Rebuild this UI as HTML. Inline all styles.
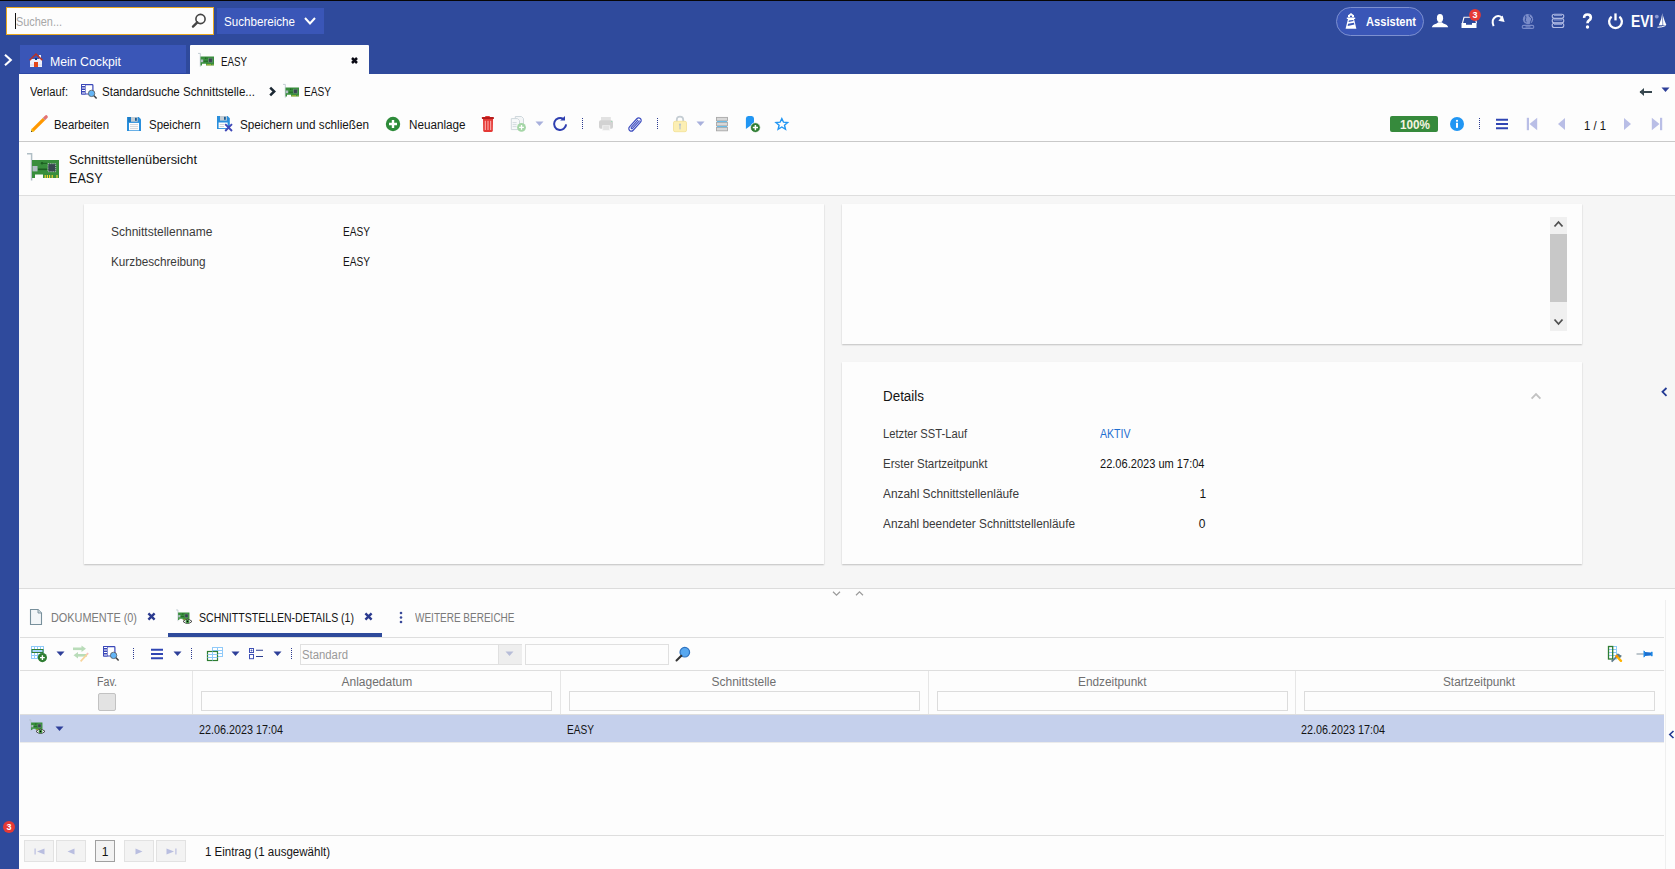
<!DOCTYPE html>
<html><head><meta charset="utf-8"><title>EASY</title>
<style>
html,body{margin:0;padding:0;}
body{width:1675px;height:869px;overflow:hidden;position:relative;background:#2f4a9c;font-family:"Liberation Sans",sans-serif;}
.a{position:absolute;}
.t{position:absolute;white-space:nowrap;line-height:normal;transform-origin:0 0;font-family:"Liberation Sans",sans-serif;}
svg{position:absolute;overflow:visible;}

</style></head>
<body>
<!-- top dark line -->
<div class="a" style="left:0;top:0;width:1675px;height:1px;background:#070604"></div>
<!-- search box -->
<div class="a" style="left:6px;top:7px;width:206px;height:26px;border:1px solid #e9a81f;background:#fdfdfd"></div>
<div class="a" style="left:15px;top:13px;width:1px;height:16px;background:#111"></div>
<svg style="left:190px;top:12px" width="18" height="18" viewBox="0 0 18 18"><circle cx="10.5" cy="7" r="4.6" fill="none" stroke="#444" stroke-width="1.6"/><path d="M7.3 10.3 L3 14.6" stroke="#444" stroke-width="2.4" stroke-linecap="round"/></svg>
<!-- Suchbereiche -->
<div class="a" style="left:217px;top:8px;width:107px;height:26px;background:#3a56b7"></div>
<svg style="left:303px;top:16px" width="14" height="10" viewBox="0 0 14 10"><path d="M2 2 L7 7.5 L12 2" fill="none" stroke="#fff" stroke-width="2"/></svg>
<!-- sidebar chevron -->
<svg style="left:3px;top:53px" width="10" height="14" viewBox="0 0 10 14"><path d="M2 1.8 L7.8 7 L2 12.2" fill="none" stroke="#fff" stroke-width="2.1"/></svg>
<!-- tabs -->
<div class="a" style="left:20px;top:45px;width:166px;height:29px;background:#3a56b7"></div>
<div class="a" style="left:20px;top:73px;width:166px;height:1px;background:#2c47a5"></div>
<svg style="left:29px;top:53px" width="14" height="14" viewBox="0 0 14 14"><rect x="10" y="2" width="2" height="3.5" fill="#eef0fa"/><rect x="1" y="6" width="12" height="8" fill="#eef0fa"/><rect x="1" y="11.5" width="12" height="1" fill="#c8cbe8" opacity=".7"/><path d="M0.6 7.2 L7 1 L13.4 7.2" fill="none" stroke="#b83226" stroke-width="1.6"/><rect x="5" y="9" width="4" height="5" fill="#e4461a"/><rect x="6" y="5" width="2" height="2" fill="#0b3a80"/></svg>
<div class="a" style="left:190px;top:45px;width:179px;height:30px;background:#fdfdfd;border-radius:1px 1px 0 0"></div>
<svg style="left:198px;top:53px" width="16" height="14" viewBox="0 0 32 28"><use href="#nic"/></svg>
<svg style="left:350px;top:56px" width="10" height="10" viewBox="0 0 10 10"><path d="M2 2 L7 7 M7 2 L2 7" stroke="#0a0a14" stroke-width="2.5"/></svg>
<!-- header right -->
<div class="a" style="left:1336px;top:7px;width:86px;height:27px;border:1px solid #7d90d0;border-radius:15px;background:#3a56b7"></div>
<svg style="left:1345px;top:12px" width="12" height="18" viewBox="0 0 12 18"><path d="M3.2 3.2 L6 0.9 L8.8 3.2 Z" fill="#fff"/><rect x="3" y="3" width="6" height="2.3" fill="#fff"/><rect x="5" y="3.7" width="2" height="1.4" fill="#3a56b7"/><rect x="1.8" y="5.6" width="8.4" height="1.4" fill="#fff"/><path d="M3 7 L9 7 L11.4 16.8 L0.6 16.8 Z" fill="#fff"/><path d="M3.9 8.6 L8.2 7.9 L8.5 9.1 L3.6 10.1 Z" fill="#3a56b7"/><path d="M3.1 11.8 L8.9 10.7 L9.4 12.6 L2.6 13.9 Z" fill="#3a56b7"/></svg>
<svg style="left:1431px;top:13px" width="18" height="15" viewBox="0 0 18 15"><ellipse cx="9" cy="5.2" rx="3.1" ry="4.1" fill="#fff"/><path d="M0.8 14.3 Q1.2 11.6 5.6 10.4 L7.2 9.3 L10.8 9.3 L12.4 10.4 Q16.8 11.6 17.2 14.3 Z" fill="#fff"/></svg>
<svg style="left:1461px;top:16px" width="17" height="13" viewBox="0 0 17 13"><path d="M1.5 7 L3 1.3 L14 1.3 L15.5 7" fill="none" stroke="#fff" stroke-width="1.1"/><path d="M0.5 7 H5 V8.8 H11 V7 H15.5 V12 H0.5 Z" fill="#fff"/></svg>
<svg style="left:1469px;top:9px" width="12" height="12" viewBox="0 0 12 12"><circle cx="6" cy="6" r="5.9" fill="#e53935"/><text x="6" y="9.2" font-family="Liberation Sans" font-size="9" font-weight="700" fill="#fff" text-anchor="middle">3</text></svg>
<svg style="left:1490px;top:13px" width="16" height="15" viewBox="0 0 16 15"><path d="M3.6 13.2 Q0.8 6.5 5.8 3.6 Q9 2 11.8 4.6" fill="none" stroke="#fff" stroke-width="2"/><path d="M12.6 2.6 L14.6 8.9 L8.4 7.8 Z" fill="#fff"/></svg>
<svg style="left:1521px;top:13px" width="14" height="16" viewBox="0 0 14 16"><circle cx="7" cy="6.2" r="5.1" fill="#7b8dca"/><path d="M4.2 2.5 Q5.6 4 4.6 5.6 Q3.6 7.3 5.3 9.2 M8.2 1.4 Q7.5 3.5 9.6 4.6 Q11.6 5.4 10.2 7.6 Q9 9.4 9.8 11" fill="none" stroke="#2f4a9c" stroke-width="1"/><rect x="1.2" y="12.4" width="11.6" height="3" rx="1.5" fill="none" stroke="#7b8dca" stroke-width="1.1"/><path d="M4.5 13.9 H9.5" stroke="#7b8dca" stroke-width="1.2"/></svg>
<svg style="left:1551px;top:13px" width="14" height="16" viewBox="0 0 14 16"><g fill="none" stroke="#b3bde5" stroke-width="1.1"><rect x="1.2" y="1.3" width="11.6" height="4" rx="2"/><rect x="1.2" y="5.8" width="11.6" height="4" rx="2"/><rect x="1.2" y="10.3" width="11.6" height="4.2" rx="2"/></g><path d="M3 2.5 H11 M3 7 H11 M3 11.5 H11" stroke="#8f9fd6" stroke-width=".9"/></svg>
<svg style="left:1582px;top:13px" width="11" height="16" viewBox="0 0 11 16"><path d="M2.2 4.8 Q2 1.5 5.4 1.5 Q8.8 1.5 8.8 4.4 Q8.8 6.2 7 7.4 Q5.5 8.4 5.5 10.2" fill="none" stroke="#fff" stroke-width="2.7"/><circle cx="5.5" cy="14" r="1.7" fill="#fff"/></svg>
<svg style="left:1607px;top:13px" width="18" height="16" viewBox="0 0 18 16"><path d="M4.6 3.6 A6.4 6.4 0 1 0 12.4 3.6" fill="none" stroke="#fff" stroke-width="2.3"/><path d="M8.5 0.4 L8.5 7.4" stroke="#fff" stroke-width="2.3"/></svg>
<svg style="left:1653px;top:12px" width="15" height="17" viewBox="0 0 15 17"><circle cx="3.8" cy="4.6" r="1.9" fill="#8c9bd4"/><path d="M9.3 1 Q8.8 7 5.8 13.2 L9.6 13.2 Z" fill="#fff"/><path d="M9.9 3.5 Q11.5 9 13.4 13 L10.2 13.2 Z" fill="#fff"/><path d="M4.5 15.3 Q9 15.2 12.6 13.6" fill="none" stroke="#fff" stroke-width="1"/></svg>

<!-- content panel -->
<div class="a" style="left:19px;top:74px;width:1656px;height:795px;background:#fdfdfd"></div>
<!-- breadcrumb icons -->
<svg style="left:81px;top:84px" width="17" height="16" viewBox="0 0 17 16"><rect x="0.6" y="0.6" width="11.3" height="9.4" rx=".8" fill="#fff" stroke="#3a47b8" stroke-width="1.2"/><rect x="0" y="0" width="4.6" height="10.6" rx=".6" fill="#3a47b8"/><g fill="#fff"><rect x="1" y="1" width="3" height="1"/><rect x="1" y="3.5" width="3" height="1"/><rect x="1" y="6" width="3" height="1"/><rect x="1" y="8.5" width="3" height="1"/></g><path d="M12.8 11.6 L15.6 14.6" stroke="#3d3d3d" stroke-width="1.5"/><circle cx="10.6" cy="9.4" r="3.2" fill="#64b5f6" stroke="#5a5a5a" stroke-width=".8"/></svg>
<svg style="left:268px;top:86px" width="9" height="11" viewBox="0 0 9 11"><path d="M2.2 1.6 L6.2 5.5 L2.2 9.4" fill="none" stroke="#1c2833" stroke-width="2.5"/></svg>
<svg style="left:283px;top:84px" width="16" height="14" viewBox="0 0 32 28"><use href="#nic"/></svg>
<svg style="left:1639px;top:87px" width="14" height="10" viewBox="0 0 14 10"><path d="M1 5 L13 5" stroke="#37474f" stroke-width="2"/><path d="M0.5 5 L5 1 L5 9 Z" fill="#37474f"/></svg>
<svg style="left:1661px;top:87px" width="9" height="6" viewBox="0 0 9 6"><path d="M0.5 0.5 L8.5 0.5 L4.5 5 Z" fill="#2e3f99"/></svg>

<!-- toolbar icons -->
<svg style="left:30px;top:115px" width="18" height="18" viewBox="0 0 18 18"><path d="M2.6 15.4 L14.4 3.6" stroke="#ff9800" stroke-width="3.3"/><path d="M13.8 4.2 L15.2 2.8" stroke="#b0bec5" stroke-width="3.3"/><path d="M15.1 2.9 L16.2 1.8" stroke="#e57373" stroke-width="3.3" stroke-linecap="round"/><path d="M1 17 L1.5 13.6 L4.4 16.5 Z" fill="#ffc107"/><path d="M1 17 L1.3 15.4 L2.6 16.7 Z" fill="#333"/></svg>
<svg style="left:126px;top:116px" width="16" height="16" viewBox="0 0 16 16"><path d="M1 1 H12.8 L15 3.3 V15 H1 Z" fill="#2a8fdc"/><rect x="2" y="1" width="3" height="5" fill="#1f7cc4"/><rect x="5" y="1" width="6.7" height="4.7" fill="#c4ccd2"/><rect x="9" y="1.8" width="1.8" height="3" fill="#1a5c94"/><rect x="3" y="6.9" width="10" height="7.4" fill="#fff"/><path d="M4 8.6 H12 M4 10.6 H12 M4 12.6 H12" stroke="#c9d0d5" stroke-width=".9"/></svg>
<svg style="left:216px;top:115px" width="18" height="18" viewBox="0 0 18 18"><path d="M1 1 H11.6 L13.8 3.2 V14 H1 Z" fill="#2a8fdc"/><rect x="4" y="1" width="6.9" height="4.6" fill="#c4ccd2"/><rect x="8" y="1.8" width="1.8" height="3" fill="#1a5c94"/><rect x="2.6" y="7.5" width="9" height="5.6" fill="#fff"/><path d="M3.6 9.5 H8 M3.6 11.5 H8" stroke="#c9d0d5" stroke-width=".9"/><path d="M9.2 9.2 L16 16 M16 9.2 L9.2 16" stroke="#3f48b8" stroke-width="1.9"/></svg>
<svg style="left:385px;top:116px" width="16" height="16" viewBox="0 0 16 16"><circle cx="8" cy="8" r="7.2" fill="#2e8b3a"/><path d="M8 4 V12 M4 8 H12" stroke="#fff" stroke-width="2.4"/></svg>
<svg style="left:481px;top:115px" width="14" height="18" viewBox="0 0 14 18"><rect x="4" y="1" width="5" height="2" rx="1" fill="#e53935"/><rect x="0.9" y="2" width="12" height="2" rx=".6" fill="#b71c1c"/><path d="M2 4 L12 4 L11.8 15.5 Q11.7 17 10.2 17 L3.8 17 Q2.3 17 2.2 15.5 Z" fill="#e53935"/><path d="M4.3 5.8 V15 M7 5.8 V15 M9.7 5.8 V15" stroke="#ffb8b8" stroke-width="1"/></svg>
<svg style="left:509px;top:115px" width="18" height="18" viewBox="0 0 18 18"><path d="M6.3 1.5 H12.5 L14.5 3.5 V12 H6.3 Z" fill="#f4f6f7" stroke="#cfd8dc" stroke-width="1"/><path d="M2.3 3.6 H8.5 L10.5 5.6 V14.6 H2.3 Z" fill="#f7f9fa" stroke="#cfd8dc" stroke-width="1"/><path d="M3.6 7.6 H7.6 M3.6 9.6 H7.6 M3.6 11.6 H7.6" stroke="#cfd8dc" stroke-width=".9"/><circle cx="12.5" cy="12.4" r="4.4" fill="#a5d6a7"/><path d="M12.5 10 V14.8 M10.1 12.4 H14.9" stroke="#fff" stroke-width="1.3"/></svg>
<svg style="left:535px;top:121px" width="9" height="6" viewBox="0 0 9 6"><path d="M0.5 0.5 L8.5 0.5 L4.5 5 Z" fill="#a8b0dc"/></svg>
<svg style="left:552px;top:115px" width="16" height="17" viewBox="0 0 16 17"><path d="M14.1 9.4 A6 6 0 1 1 11.3 3.9" fill="none" stroke="#2f3fb0" stroke-width="2"/><path d="M13 1 L13 5.6 L8.2 5.6 Z" fill="#2f3fb0"/></svg>
<svg style="left:581px;top:118px" width="3" height="13" viewBox="0 0 3 13"><rect x="1" y="0" width="1" height="1" fill="#2b3a90"/><rect x="1" y="2" width="1" height="1" fill="#2b3a90"/><rect x="1" y="4" width="1" height="1" fill="#2b3a90"/><rect x="1" y="6" width="1" height="1" fill="#2b3a90"/><rect x="1" y="8" width="1" height="1" fill="#2b3a90"/><rect x="1" y="10" width="1" height="1" fill="#2b3a90"/></svg>
<svg style="left:598px;top:116px" width="16" height="16" viewBox="0 0 16 16"><rect x="3" y="1" width="9.8" height="3.8" fill="#e2e2e2"/><rect x="1" y="4.2" width="14" height="8.6" rx="1.8" fill="#d2d2d2"/><rect x="4.2" y="9.3" width="8" height="5.4" fill="#f2f2f2"/><path d="M5.2 11 H11.2 M5.2 13 H11" stroke="#cdcdcd" stroke-width=".8"/><circle cx="13.7" cy="5.5" r=".6" fill="#8ee0b0"/></svg>
<svg style="left:627px;top:115px" width="16" height="17" viewBox="0 0 16 17"><g transform="translate(8 9.5) rotate(42)"><rect x="-2.5" y="-8" width="5" height="16" rx="2.5" fill="none" stroke="#3f4fc0" stroke-width="1.2"/><path d="M-0.8 -5.5 V4.6 A0.8 0.8 0 0 0 0.8 4.6 V-6" fill="none" stroke="#3f4fc0" stroke-width="1.1"/></g></svg>
<svg style="left:656px;top:118px" width="3" height="13" viewBox="0 0 3 13"><rect x="1" y="0" width="1" height="1" fill="#2b3a90"/><rect x="1" y="2" width="1" height="1" fill="#2b3a90"/><rect x="1" y="4" width="1" height="1" fill="#2b3a90"/><rect x="1" y="6" width="1" height="1" fill="#2b3a90"/><rect x="1" y="8" width="1" height="1" fill="#2b3a90"/><rect x="1" y="10" width="1" height="1" fill="#2b3a90"/></svg>
<svg style="left:672px;top:115px" width="16" height="18" viewBox="0 0 16 18"><path d="M4.8 6.5 V4.8 Q4.8 1.6 8 1.6 Q11.2 1.6 11.2 4.8 V6.5" fill="none" stroke="#c5cdd3" stroke-width="1.8"/><rect x="1.5" y="6.3" width="13" height="10.4" rx="1.5" fill="#fcefb4" stroke="#f1df94" stroke-width=".8"/><circle cx="8" cy="9.6" r="1.1" fill="#b8c4cc"/><rect x="7.4" y="9.8" width="1.2" height="4.6" fill="#b8c4cc"/></svg>
<svg style="left:696px;top:121px" width="9" height="6" viewBox="0 0 9 6"><path d="M0.5 0.5 L8.5 0.5 L4.5 5 Z" fill="#a8b0dc"/></svg>
<svg style="left:715px;top:116px" width="14" height="16" viewBox="0 0 14 16"><g fill="#d8d8d8" stroke="#a8a8a8" stroke-width=".9"><rect x="1.5" y="1.4" width="11" height="3.4"/><rect x="1.5" y="6.4" width="11" height="3.4"/><rect x="1.5" y="11.4" width="11" height="3.4"/></g><path d="M2 5.6 H12 M2 10.6 H12" stroke="#4fb3e8" stroke-width=".9"/></svg>
<svg style="left:744px;top:115px" width="17" height="18" viewBox="0 0 17 18"><path d="M1.9 3.5 Q1.9 1 4.3 1 L7.6 1 Q10 1 10 3.5 L10 13 L6 11 L1.9 14 Z" fill="#2196f3"/><circle cx="11.4" cy="12.6" r="4.9" fill="#2e7d32" stroke="#fdfdfd" stroke-width=".8"/><path d="M11.4 10 V15.2 M8.8 12.6 H14" stroke="#fff" stroke-width="1.5"/></svg>
<svg style="left:774px;top:116px" width="16" height="16" viewBox="0 0 16 16"><path d="M7.8 2.6 L9.5 6.2 L13.6 6.5 L10.5 9.2 L11.5 13.3 L7.8 11 L4.1 13.3 L5.1 9.2 L2 6.5 L6.1 6.2 Z" fill="none" stroke="#2196f3" stroke-width="1.4" stroke-linejoin="miter"/></svg>

<!-- right toolbar -->
<div class="a" style="left:1390px;top:116px;width:48px;height:16px;background:#368a3c;border-radius:2px"></div>
<svg style="left:1449px;top:116px" width="16" height="16" viewBox="0 0 16 16"><circle cx="8" cy="8" r="7" fill="#2196f3"/><circle cx="8" cy="4.8" r="1.1" fill="#fff"/><rect x="7" y="6.8" width="2" height="5" fill="#fff"/></svg>
<svg style="left:1478px;top:118px" width="3" height="13" viewBox="0 0 3 13"><rect x="1" y="0" width="1" height="1" fill="#2b3a90"/><rect x="1" y="2" width="1" height="1" fill="#2b3a90"/><rect x="1" y="4" width="1" height="1" fill="#2b3a90"/><rect x="1" y="6" width="1" height="1" fill="#2b3a90"/><rect x="1" y="8" width="1" height="1" fill="#2b3a90"/><rect x="1" y="10" width="1" height="1" fill="#2b3a90"/></svg>
<svg style="left:1495px;top:118px" width="14" height="12" viewBox="0 0 14 12"><path d="M1 1.8 H13 M1 6 H13 M1 10.2 H13" stroke="#2f45b3" stroke-width="2"/></svg>
<svg style="left:1526px;top:117px" width="12" height="14" viewBox="0 0 12 14"><rect x="0.8" y="0.8" width="2.2" height="12.4" fill="#b9bee6"/><path d="M11.2 0.8 L3.5 7 L11.2 13.2 Z" fill="#b9bee6"/></svg>
<svg style="left:1557px;top:117px" width="9" height="14" viewBox="0 0 9 14"><path d="M8 1 L1 7 L8 13 Z" fill="#b9bee6"/></svg>
<svg style="left:1623px;top:117px" width="9" height="14" viewBox="0 0 9 14"><path d="M1 1 L8 7 L1 13 Z" fill="#b9bee6"/></svg>
<svg style="left:1651px;top:117px" width="12" height="14" viewBox="0 0 12 14"><rect x="9" y="0.8" width="2.2" height="12.4" fill="#b9bee6"/><path d="M0.8 0.8 L8.5 7 L0.8 13.2 Z" fill="#b9bee6"/></svg>

<div class="a" style="left:19px;top:141px;width:1656px;height:1px;background:#c9c9c9"></div>
<!-- header big icon -->
<svg style="left:27px;top:153px" width="32" height="28" viewBox="0 0 32 28"><use href="#nic"/></svg>
<div class="a" style="left:19px;top:195px;width:1656px;height:1px;background:#dedede"></div>
<!-- gray content area -->
<div class="a" style="left:19px;top:196px;width:1656px;height:392px;background:#f6f6f6"></div>
<div class="a" style="left:19px;top:588px;width:1656px;height:1px;background:#dcdcdc"></div>
<!-- cards -->
<div class="a" style="left:84px;top:204px;width:740px;height:360px;background:#fdfdfd;box-shadow:0 1px 1.5px rgba(0,0,0,.22)"></div>
<div class="a" style="left:842px;top:204px;width:740px;height:140px;background:#fdfdfd;box-shadow:0 1px 1.5px rgba(0,0,0,.22)"></div>
<div class="a" style="left:842px;top:362px;width:740px;height:202px;background:#fdfdfd;box-shadow:0 1px 1.5px rgba(0,0,0,.22)"></div>
<!-- scrollbar -->
<div class="a" style="left:1550px;top:217px;width:17px;height:114px;background:#f0f0f0"></div>
<div class="a" style="left:1550px;top:234px;width:17px;height:68px;background:#c8c8c8"></div>
<svg style="left:1553px;top:219px" width="11" height="10" viewBox="0 0 11 10"><path d="M1.5 7.5 L5.5 3 L9.5 7.5" fill="none" stroke="#505050" stroke-width="1.8"/></svg>
<svg style="left:1553px;top:317px" width="11" height="10" viewBox="0 0 11 10"><path d="M1.5 2.5 L5.5 7 L9.5 2.5" fill="none" stroke="#505050" stroke-width="1.8"/></svg>
<svg style="left:1530px;top:391.5px" width="12" height="9" viewBox="0 0 12 9"><path d="M1.6 6.6 L6 2.2 L10.4 6.6" fill="none" stroke="#c2c2c2" stroke-width="1.9"/></svg>
<svg style="left:1661px;top:387px" width="7" height="10" viewBox="0 0 7 10"><path d="M5.5 1 L1.5 4.8 L5.5 8.8" fill="none" stroke="#233a94" stroke-width="1.8"/></svg>
<!-- splitter chevrons -->
<svg style="left:832px;top:590px" width="9" height="7" viewBox="0 0 9 7"><path d="M1 1.8 L4.5 5.2 L8 1.8" fill="none" stroke="#9a9a9a" stroke-width="1.2"/></svg>
<svg style="left:855px;top:590px" width="9" height="7" viewBox="0 0 9 7"><path d="M1 5.2 L4.5 1.8 L8 5.2" fill="none" stroke="#9a9a9a" stroke-width="1.2"/></svg>

<!-- bottom tabs -->
<svg style="left:29px;top:608px" width="14" height="18" viewBox="0 0 14 18"><path d="M1.5 1.5 L9 1.5 L12.5 5 L12.5 16.5 L1.5 16.5 Z" fill="#f3f6f8" stroke="#78909c" stroke-width="1.1"/><path d="M9 1.5 L9 5 L12.5 5" fill="#cfd8dc" stroke="#78909c" stroke-width=".9"/></svg>
<svg style="left:147px;top:612px" width="9" height="9" viewBox="0 0 9 9"><path d="M1.4 1.4 L7.6 7.6 M7.6 1.4 L1.4 7.6" stroke="#2b3a8f" stroke-width="2.4"/></svg>
<svg style="left:176px;top:609px" width="18" height="16" viewBox="0 0 18 16"><g transform="translate(0 .6) scale(.42)"><use href="#nic"/></g><path d="M7 12.4 Q11.5 8.2 16 12.4 Q11.5 16.6 7 12.4 Z" fill="#fff" stroke="#333" stroke-width=".9"/><circle cx="11.5" cy="12.4" r="1.9" fill="#43a047"/><circle cx="11.5" cy="12.4" r=".8" fill="#000"/></svg>
<svg style="left:364px;top:612px" width="9" height="9" viewBox="0 0 9 9"><path d="M1.4 1.4 L7.6 7.6 M7.6 1.4 L1.4 7.6" stroke="#2b3a8f" stroke-width="2.4"/></svg>
<div class="a" style="left:168px;top:633px;width:214px;height:4px;background:#2e4a9b"></div>
<svg style="left:399px;top:611px" width="4" height="13" viewBox="0 0 4 13"><circle cx="2" cy="2" r="1.3" fill="#3a4a9a"/><circle cx="2" cy="6.5" r="1.3" fill="#3a4a9a"/><circle cx="2" cy="11" r="1.3" fill="#3a4a9a"/></svg>
<div class="a" style="left:20px;top:637px;width:1644px;height:1px;background:#dedede"></div>

<!-- grid toolbar -->
<svg style="left:31px;top:646px" width="17" height="17" viewBox="0 0 17 17"><rect x="0.5" y="0.5" width="12" height="12" fill="#fff" stroke="#90caf9" stroke-width="1"/><path d="M0.5 3.5 H12.5 M0.5 6.5 H12.5 M0.5 9.5 H12.5 M3.5 0.5 V12.5 M6.5 0.5 V12.5 M9.5 0.5 V12.5" stroke="#90caf9" stroke-width="1"/><rect x="1" y="3.5" width="11" height="3" fill="#a8d4fb" stroke="#2e7d32" stroke-width="1"/><circle cx="11.4" cy="11.6" r="4.6" fill="#2e7d32"/><path d="M11.4 9.2 V14 M9 11.6 H13.8" stroke="#fff" stroke-width="1.4"/></svg>
<svg style="left:56px;top:651px" width="9" height="6" viewBox="0 0 9 6"><path d="M0.5 0.5 L8.5 0.5 L4.5 5 Z" fill="#2e3f99"/></svg>
<svg style="left:72px;top:645px" width="18" height="18" viewBox="0 0 18 18"><path d="M1 3.8 H10" stroke="#b9dcb9" stroke-width="2.6"/><path d="M9.5 0.5 L14 3.8 L9.5 7.1 Z" fill="#b9dcb9"/><path d="M15 10.3 H5.5" stroke="#b9dcb9" stroke-width="2.6"/><path d="M6 7 L1.5 10.3 L6 13.6 Z" fill="#b9dcb9"/><path d="M8.6 16.4 L15.4 9" stroke="#f8d49a" stroke-width="1.7"/><path d="M15 9.4 L16.2 8.1" stroke="#f4c0c0" stroke-width="1.7"/></svg>
<svg style="left:103px;top:646px" width="17" height="16" viewBox="0 0 17 16"><rect x="0.6" y="0.6" width="11.3" height="9.4" rx=".8" fill="#fff" stroke="#3a47b8" stroke-width="1.2"/><rect x="0" y="0" width="4.6" height="10.6" rx=".6" fill="#3a47b8"/><g fill="#fff"><rect x="1" y="1" width="3" height="1"/><rect x="1" y="3.5" width="3" height="1"/><rect x="1" y="6" width="3" height="1"/><rect x="1" y="8.5" width="3" height="1"/></g><path d="M12.8 11.6 L15.6 14.6" stroke="#3d3d3d" stroke-width="1.5"/><circle cx="10.6" cy="9.4" r="3.2" fill="#64b5f6" stroke="#5a5a5a" stroke-width=".8"/></svg>
<svg style="left:132px;top:648px" width="3" height="13" viewBox="0 0 3 13"><rect x="1" y="0" width="1" height="1" fill="#2b3a90"/><rect x="1" y="2" width="1" height="1" fill="#2b3a90"/><rect x="1" y="4" width="1" height="1" fill="#2b3a90"/><rect x="1" y="6" width="1" height="1" fill="#2b3a90"/><rect x="1" y="8" width="1" height="1" fill="#2b3a90"/><rect x="1" y="10" width="1" height="1" fill="#2b3a90"/></svg>
<svg style="left:150px;top:648px" width="14" height="12" viewBox="0 0 14 12"><path d="M1 1.8 H13 M1 6 H13 M1 10.2 H13" stroke="#2f45b3" stroke-width="2"/></svg>
<svg style="left:173px;top:651px" width="9" height="6" viewBox="0 0 9 6"><path d="M0.5 0.5 L8.5 0.5 L4.5 5 Z" fill="#2e3f99"/></svg>
<svg style="left:190px;top:648px" width="3" height="13" viewBox="0 0 3 13"><rect x="1" y="0" width="1" height="1" fill="#2b3a90"/><rect x="1" y="2" width="1" height="1" fill="#2b3a90"/><rect x="1" y="4" width="1" height="1" fill="#2b3a90"/><rect x="1" y="6" width="1" height="1" fill="#2b3a90"/><rect x="1" y="8" width="1" height="1" fill="#2b3a90"/><rect x="1" y="10" width="1" height="1" fill="#2b3a90"/></svg>
<svg style="left:206px;top:646px" width="18" height="16" viewBox="0 0 18 16"><rect x="6.5" y="1.5" width="10" height="9" fill="#fff" stroke="#90caf9" stroke-width="1"/><path d="M6.5 4.5 H16.5 M6.5 7.5 H16.5 M11.5 1.5 V10.5" stroke="#90caf9" stroke-width="1"/><rect x="1.5" y="5.5" width="10" height="9" fill="#fff" stroke="#2e7d32" stroke-width="1.2"/><path d="M1.5 8.5 H11.5 M1.5 11.5 H11.5 M6.5 5.5 V14.5" stroke="#90caf9" stroke-width="1"/></svg>
<svg style="left:231px;top:651px" width="9" height="6" viewBox="0 0 9 6"><path d="M0.5 0.5 L8.5 0.5 L4.5 5 Z" fill="#2e3f99"/></svg>
<svg style="left:248px;top:647px" width="16" height="14" viewBox="0 0 16 14"><rect x="1.5" y="1.5" width="4" height="4" fill="none" stroke="#3f51b5" stroke-width="1"/><rect x="1.5" y="7.5" width="4" height="4.2" fill="none" stroke="#3f51b5" stroke-width="1"/><path d="M3.5 2.5 V4.5 M2.5 3.5 H4.5" stroke="#3f51b5" stroke-width=".8"/><path d="M8 3.2 H15 M8 9.5 H15" stroke="#2c3e8f" stroke-width="1.1"/></svg>
<svg style="left:273px;top:651px" width="9" height="6" viewBox="0 0 9 6"><path d="M0.5 0.5 L8.5 0.5 L4.5 5 Z" fill="#2e3f99"/></svg>
<svg style="left:290px;top:648px" width="3" height="13" viewBox="0 0 3 13"><rect x="1" y="0" width="1" height="1" fill="#2b3a90"/><rect x="1" y="2" width="1" height="1" fill="#2b3a90"/><rect x="1" y="4" width="1" height="1" fill="#2b3a90"/><rect x="1" y="6" width="1" height="1" fill="#2b3a90"/><rect x="1" y="8" width="1" height="1" fill="#2b3a90"/><rect x="1" y="10" width="1" height="1" fill="#2b3a90"/></svg>
<div class="a" style="left:300px;top:644px;width:220px;height:19px;border:1px solid #e0e0e0;background:#fdfdfd"></div>
<div class="a" style="left:498px;top:645px;width:23px;height:19px;background:#eeeeee;border-left:1px solid #e0e0e0"></div>
<svg style="left:505px;top:651px" width="9" height="6" viewBox="0 0 9 6"><path d="M0.5 0.5 L8.5 0.5 L4.5 5 Z" fill="#b7bdd8"/></svg>
<div class="a" style="left:525px;top:644px;width:142px;height:19px;border:1px solid #e0e0e0;background:#fdfdfd"></div>
<svg style="left:675px;top:646px" width="16" height="16" viewBox="0 0 16 16"><circle cx="9.8" cy="6.2" r="4.8" fill="#58a8f0" stroke="#2f73c0" stroke-width="1.2"/><path d="M6.3 9.7 L1.5 14.5" stroke="#333" stroke-width="2" stroke-linecap="round"/></svg>
<svg style="left:1607px;top:645px" width="17" height="18" viewBox="0 0 17 18"><rect x="5.5" y="1.5" width="4" height="12.5" fill="#fff" stroke="#90caf9" stroke-width="1"/><path d="M1.5 4.5 H9.5 M1.5 7.5 H9.5 M1.5 10.5 H9.5" stroke="#90caf9" stroke-width="1"/><rect x="1.5" y="1.5" width="4.2" height="12.5" fill="none" stroke="#2e7d32" stroke-width="1.3"/><path d="M4.6 16.6 L11.4 9.8" stroke="#607d8b" stroke-width="1.8"/><path d="M10.6 8.4 A2.6 2.6 0 1 0 14.5 10.2 L13 10 L12.2 9 Z" fill="#607d8b"/><path d="M9.4 11 L14 15.8" stroke="#ffb300" stroke-width="2.4" stroke-linecap="round"/><path d="M9 10.4 L10.6 12" stroke="#ff8f00" stroke-width="2.4"/></svg>
<svg style="left:1635px;top:648px" width="18" height="11" viewBox="0 0 18 11"><path d="M1.5 6 H8.8" stroke="#a9b5bc" stroke-width="1.5"/><path d="M8.5 2.5 L10 3.2 L10 8.8 L8.5 9.5 Z" fill="#1e88e5"/><path d="M10 4 L16 4.6 L16 7.4 L10 8 Z" fill="#1a6fd0"/><rect x="16" y="3.8" width="1.6" height="4.4" fill="#1e88e5"/></svg>
<div class="a" style="left:20px;top:670px;width:1644px;height:1px;background:#dedede"></div>

<!-- grid header -->
<div class="a" style="left:192px;top:671px;width:1px;height:43px;background:#e6e6e6"></div>
<div class="a" style="left:560px;top:671px;width:1px;height:43px;background:#e6e6e6"></div>
<div class="a" style="left:928px;top:671px;width:1px;height:43px;background:#e6e6e6"></div>
<div class="a" style="left:1295px;top:671px;width:1px;height:43px;background:#e6e6e6"></div>
<div class="a" style="left:98px;top:693px;width:16px;height:16px;border:1px solid #c2c2c2;border-radius:2px;background:#e3e3e3"></div>
<div class="a" style="left:201px;top:691px;width:349px;height:18px;border:1px solid #dcdcdc;background:#fdfdfd"></div>
<div class="a" style="left:569px;top:691px;width:349px;height:18px;border:1px solid #dcdcdc;background:#fdfdfd"></div>
<div class="a" style="left:937px;top:691px;width:349px;height:18px;border:1px solid #dcdcdc;background:#fdfdfd"></div>
<div class="a" style="left:1304px;top:691px;width:349px;height:18px;border:1px solid #dcdcdc;background:#fdfdfd"></div>
<!-- selected row -->
<div class="a" style="left:20px;top:714px;width:1644px;height:1px;background:#dedede"></div><div class="a" style="left:20px;top:742px;width:1644px;height:1px;background:#ebebeb"></div>
<div class="a" style="left:20px;top:715px;width:1644px;height:27px;background:#c5d0ec"></div>
<svg style="left:29px;top:719px" width="18" height="16" viewBox="0 0 18 16"><g transform="translate(0 .6) scale(.42)"><use href="#nic"/></g><path d="M7 12.4 Q11.5 8.2 16 12.4 Q11.5 16.6 7 12.4 Z" fill="#fff" stroke="#333" stroke-width=".9"/><circle cx="11.5" cy="12.4" r="1.9" fill="#43a047"/><circle cx="11.5" cy="12.4" r=".8" fill="#000"/></svg>
<svg style="left:55px;top:725.5px" width="9" height="6" viewBox="0 0 9 6"><path d="M0.5 0.5 L8.5 0.5 L4.5 5 Z" fill="#2e3f99"/></svg>
<svg style="left:1668px;top:730px" width="7" height="9" viewBox="0 0 7 9"><path d="M5.5 1 L1.8 4.5 L5.5 8" fill="none" stroke="#233a94" stroke-width="1.6"/></svg>
<div class="a" style="left:1665px;top:600px;width:1px;height:269px;background:#efefef"></div>

<!-- pager -->
<div class="a" style="left:20px;top:835px;width:1644px;height:1px;background:#dedede"></div>
<div class="a" style="left:24px;top:840px;width:28px;height:20px;border:1px solid #e2e2e2;background:#f3f3f3"></div>
<div class="a" style="left:56px;top:840px;width:28px;height:20px;border:1px solid #e2e2e2;background:#f3f3f3"></div>
<div class="a" style="left:95px;top:840px;width:18px;height:20px;border:1px solid #a0a0a0;background:#f3f3f3"></div>
<div class="a" style="left:124px;top:840px;width:28px;height:20px;border:1px solid #e2e2e2;background:#f3f3f3"></div>
<div class="a" style="left:156px;top:840px;width:28px;height:20px;border:1px solid #e2e2e2;background:#f3f3f3"></div>
<svg style="left:34px;top:848px" width="11" height="7" viewBox="0 0 11 7"><rect x="0.5" y="0.5" width="1.2" height="6" fill="#b9bee0"/><path d="M10.5 0.5 L3 3.5 L10.5 6.5 Z" fill="#b9bee0"/></svg>
<svg style="left:67px;top:848px" width="8" height="7" viewBox="0 0 8 7"><path d="M7.5 0.5 L0.5 3.5 L7.5 6.5 Z" fill="#b9bee0"/></svg>
<svg style="left:135px;top:848px" width="8" height="7" viewBox="0 0 8 7"><path d="M0.5 0.5 L7.5 3.5 L0.5 6.5 Z" fill="#b9bee0"/></svg>
<svg style="left:166px;top:848px" width="11" height="7" viewBox="0 0 11 7"><rect x="9.3" y="0.5" width="1.2" height="6" fill="#b9bee0"/><path d="M0.5 0.5 L8 3.5 L0.5 6.5 Z" fill="#b9bee0"/></svg>
<!-- sidebar badge -->
<svg style="left:2px;top:820px" width="14" height="14" viewBox="0 0 14 14"><circle cx="7" cy="7" r="6" fill="#e53935"/><text x="7" y="10.4" font-family="Liberation Sans" font-size="9" font-weight="700" fill="#fff" text-anchor="middle">3</text></svg>

<!-- symbol defs -->
<svg width="0" height="0" style="left:0;top:0"><defs><g id="nic"><path d="M0 0.8 H4.6 V27.5" fill="none" stroke="#b0bec5" stroke-width="1.5"/><path d="M5 7 H32 V25 H16 V21.6 H8 V25 H5 Z" fill="#388e3c"/><rect x="5.5" y="13" width="5" height="5.4" fill="#b0bec5"/><rect x="11" y="15.5" width="9" height="1.6" fill="#1b5e20"/><path d="M15 10.3 H20" stroke="#1b5e20" stroke-width="1"/><circle cx="15" cy="10.3" r="1.2" fill="#1b5e20"/><rect x="21" y="10.7" width="7.7" height="8" fill="#37474f" stroke="#cfd8dc" stroke-width=".8" stroke-dasharray="1.2 1"/><path d="M18.2 22 V25 M20.4 22 V25 M22.6 22 V25 M25.2 22 V25 M30 22 V25" stroke="#fdd835" stroke-width="1.1"/></g></defs></svg>

<div class="t" style="left:16.00px;top:14.23px;font-size:13px;font-weight:400;color:#a8a8a8;transform:scaleX(0.8375);">Suchen...</div>
<div class="t" style="left:224.00px;top:14.69px;font-size:12.5px;font-weight:400;color:#ffffff;transform:scaleX(0.9288);">Suchbereiche</div>
<div class="t" style="left:50.00px;top:54.69px;font-size:12.5px;font-weight:400;color:#ffffff;transform:scaleX(0.9827);">Mein Cockpit</div>
<div class="t" style="left:221.00px;top:55.14px;font-size:12px;font-weight:400;color:#141414;transform:scaleX(0.8121);">EASY</div>
<div class="t" style="left:1366.00px;top:15.14px;font-size:12px;font-weight:700;color:#ffffff;transform:scaleX(0.9256);">Assistent</div>
<div class="t" style="left:1630.50px;top:12.07px;font-size:16.5px;font-weight:700;color:#ffffff;transform:scaleX(0.8460);">EVI</div>
<div class="t" style="left:30.00px;top:85.14px;font-size:12px;font-weight:400;color:#141414;transform:scaleX(0.9338);">Verlauf:</div>
<div class="t" style="left:102.00px;top:85.14px;font-size:12px;font-weight:400;color:#141414;transform:scaleX(0.9637);">Standardsuche Schnittstelle...</div>
<div class="t" style="left:304.00px;top:85.14px;font-size:12px;font-weight:400;color:#141414;transform:scaleX(0.8433);">EASY</div>
<div class="t" style="left:54.00px;top:118.14px;font-size:12px;font-weight:400;color:#141414;transform:scaleX(0.9476);">Bearbeiten</div>
<div class="t" style="left:149.00px;top:118.14px;font-size:12px;font-weight:400;color:#141414;transform:scaleX(0.9531);">Speichern</div>
<div class="t" style="left:240.00px;top:118.14px;font-size:12px;font-weight:400;color:#141414;transform:scaleX(0.9767);">Speichern und schließen</div>
<div class="t" style="left:408.50px;top:118.14px;font-size:12px;font-weight:400;color:#141414;transform:scaleX(0.9733);">Neuanlage</div>
<div class="t" style="left:1400.00px;top:118.14px;font-size:12px;font-weight:700;color:#f4f4e0;transform:scaleX(0.9775);">100%</div>
<div class="t" style="left:1583.50px;top:119.14px;font-size:12px;font-weight:400;color:#141414;transform:scaleX(0.9422);">1 / 1</div>
<div class="t" style="left:68.80px;top:151.87px;font-size:13.4px;font-weight:400;color:#141414;transform:scaleX(0.9554);">Schnittstellenübersicht</div>
<div class="t" style="left:68.80px;top:169.43px;font-size:15px;font-weight:400;color:#141414;transform:scaleX(0.8371);">EASY</div>
<div class="t" style="left:111.00px;top:225.14px;font-size:12px;font-weight:400;color:#3a3a3a;">Schnittstellenname</div>
<div class="t" style="left:343.00px;top:225.14px;font-size:12px;font-weight:400;color:#141414;transform:scaleX(0.8433);">EASY</div>
<div class="t" style="left:111.00px;top:255.14px;font-size:12px;font-weight:400;color:#3a3a3a;transform:scaleX(0.9780);">Kurzbeschreibung</div>
<div class="t" style="left:343.00px;top:255.14px;font-size:12px;font-weight:400;color:#141414;transform:scaleX(0.8433);">EASY</div>
<div class="t" style="left:883.00px;top:388.33px;font-size:14px;font-weight:400;color:#141414;transform:scaleX(0.9581);">Details</div>
<div class="t" style="left:883.00px;top:427.14px;font-size:12px;font-weight:400;color:#3a3a3a;transform:scaleX(0.9328);">Letzter SST-Lauf</div>
<div class="t" style="left:1100.00px;top:427.14px;font-size:12px;font-weight:400;color:#1e6fd0;transform:scaleX(0.8796);">AKTIV</div>
<div class="t" style="left:883.00px;top:457.14px;font-size:12px;font-weight:400;color:#3a3a3a;transform:scaleX(0.9613);">Erster Startzeitpunkt</div>
<div class="t" style="left:1100.00px;top:457.14px;font-size:12px;font-weight:400;color:#141414;transform:scaleX(0.9213);">22.06.2023 um 17:04</div>
<div class="t" style="left:883.00px;top:487.14px;font-size:12px;font-weight:400;color:#3a3a3a;transform:scaleX(0.9897);">Anzahl Schnittstellenläufe</div>
<div class="t" style="left:1199.53px;top:487.14px;font-size:12px;font-weight:400;color:#141414;">1</div>
<div class="t" style="left:883.00px;top:517.14px;font-size:12px;font-weight:400;color:#3a3a3a;transform:scaleX(0.9856);">Anzahl beendeter Schnittstellenläufe</div>
<div class="t" style="left:1198.83px;top:517.14px;font-size:12px;font-weight:400;color:#141414;">0</div>
<div class="t" style="left:50.50px;top:611.14px;font-size:12px;font-weight:400;color:#7a7a7a;transform:scaleX(0.9084);">DOKUMENTE (0)</div>
<div class="t" style="left:198.50px;top:611.14px;font-size:12px;font-weight:400;color:#141414;transform:scaleX(0.8783);">SCHNITTSTELLEN-DETAILS (1)</div>
<div class="t" style="left:415.00px;top:611.14px;font-size:12px;font-weight:400;color:#7a7a7a;transform:scaleX(0.8337);">WEITERE BEREICHE</div>
<div class="t" style="left:302.00px;top:648.14px;font-size:12px;font-weight:400;color:#9a9a9a;transform:scaleX(0.9445);">Standard</div>
<div class="t" style="left:96.50px;top:675.14px;font-size:12px;font-weight:400;color:#6f6f6f;transform:scaleX(0.8910);">Fav.</div>
<div class="t" style="left:341.50px;top:675.14px;font-size:12px;font-weight:400;color:#6f6f6f;">Anlagedatum</div>
<div class="t" style="left:711.50px;top:675.14px;font-size:12px;font-weight:400;color:#6f6f6f;">Schnittstelle</div>
<div class="t" style="left:1078.00px;top:675.14px;font-size:12px;font-weight:400;color:#6f6f6f;transform:scaleX(0.9873);">Endzeitpunkt</div>
<div class="t" style="left:1443.00px;top:675.14px;font-size:12px;font-weight:400;color:#6f6f6f;transform:scaleX(0.9813);">Startzeitpunkt</div>
<div class="t" style="left:198.80px;top:723.14px;font-size:12px;font-weight:400;color:#141414;transform:scaleX(0.8991);">22.06.2023 17:04</div>
<div class="t" style="left:567.00px;top:723.14px;font-size:12px;font-weight:400;color:#141414;transform:scaleX(0.8433);">EASY</div>
<div class="t" style="left:1301.30px;top:723.14px;font-size:12px;font-weight:400;color:#141414;transform:scaleX(0.8991);">22.06.2023 17:04</div>
<div class="t" style="left:101.66px;top:845.14px;font-size:12px;font-weight:400;color:#141414;">1</div>
<div class="t" style="left:204.80px;top:845.14px;font-size:12px;font-weight:400;color:#141414;transform:scaleX(0.9610);">1 Eintrag (1 ausgewählt)</div>
</body></html>
